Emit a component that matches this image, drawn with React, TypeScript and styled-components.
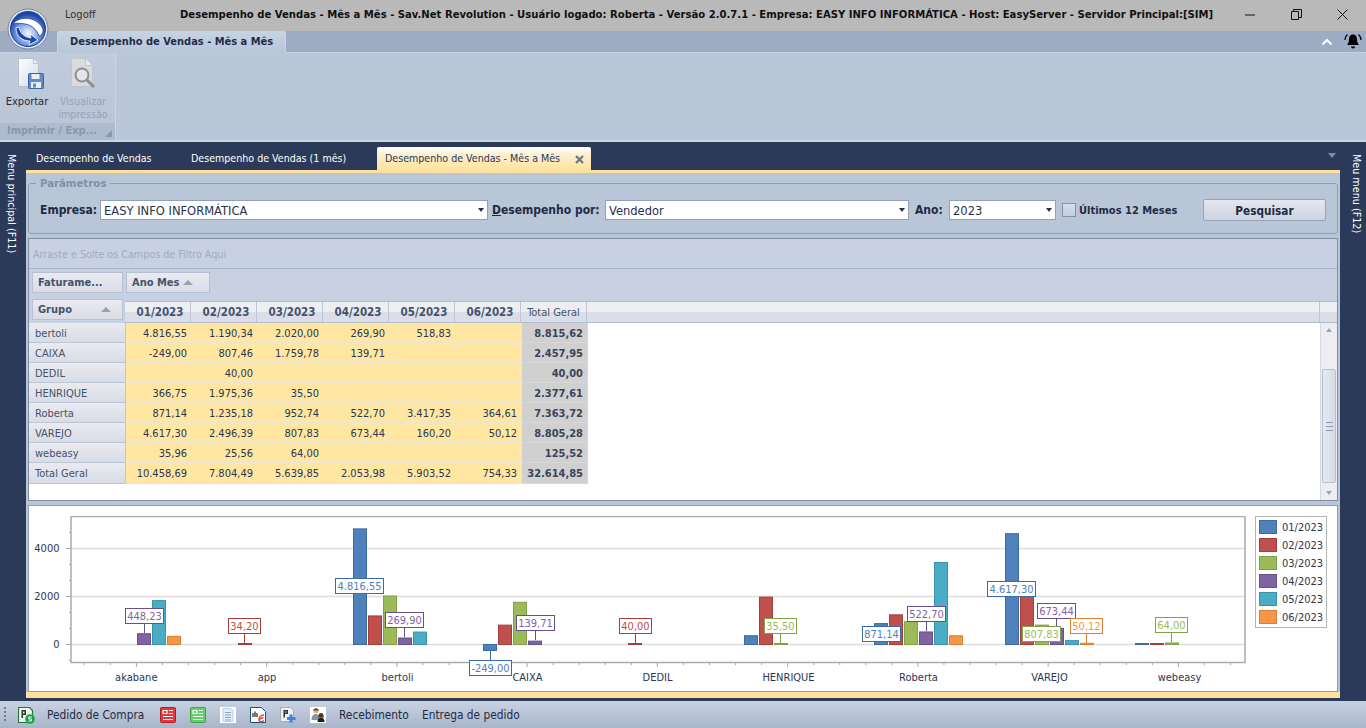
import React from 'react';
import styled, {createGlobalStyle} from 'styled-components';

const FONT = '"DejaVu Sans Condensed", "DejaVu Sans", sans-serif';
const NAVY = '#2b3a58';

const GlobalStyle = createGlobalStyle`
  html, body { margin: 0; padding: 0; }
  body { width: 1366px; height: 728px; overflow: hidden; font-family: ${FONT}; font-size: 11px; color: #1f2b45; }
  * { box-sizing: border-box; }
`;

const PERIODS = ['01/2023', '02/2023', '03/2023', '04/2023', '05/2023', '06/2023'];

const ROWS = [
  {name: 'bertoli', cells: ['4.816,55', '1.190,34', '2.020,00', '269,90', '518,83', ''], total: '8.815,62'},
  {name: 'CAIXA', cells: ['-249,00', '807,46', '1.759,78', '139,71', '', ''], total: '2.457,95'},
  {name: 'DEDIL', cells: ['', '40,00', '', '', '', ''], total: '40,00'},
  {name: 'HENRIQUE', cells: ['366,75', '1.975,36', '35,50', '', '', ''], total: '2.377,61'},
  {name: 'Roberta', cells: ['871,14', '1.235,18', '952,74', '522,70', '3.417,35', '364,61'], total: '7.363,72'},
  {name: 'VAREJO', cells: ['4.617,30', '2.496,39', '807,83', '673,44', '160,20', '50,12'], total: '8.805,28'},
  {name: 'webeasy', cells: ['35,96', '25,56', '64,00', '', '', ''], total: '125,52'},
  {name: 'Total Geral', cells: ['10.458,69', '7.804,49', '5.639,85', '2.053,98', '5.903,52', '754,33'], total: '32.614,85'},
];

const SERIES = [
  {fill: '#4f81bd', line: '#3d6a9f'},
  {fill: '#c0504d', line: '#a03f3d'},
  {fill: '#9bbb59', line: '#84a048'},
  {fill: '#8064a2', line: '#674f87'},
  {fill: '#4bacc6', line: '#3a93ab'},
  {fill: '#f79646', line: '#d98032'},
];

const GROUPS = [
  {name: 'akabane', x: 136.3, values: [0, 0, 0, 448.23, 1830, 340]},
  {name: 'app', x: 267, values: [0, 34.2, 0, 0, 0, 0]},
  {name: 'bertoli', x: 397.5, values: [4816.55, 1190.34, 2020, 269.9, 518.83, 0]},
  {name: 'CAIXA', x: 527.5, values: [-249, 807.46, 1759.78, 139.71, 0, 0]},
  {name: 'DEDIL', x: 657.5, values: [0, 40, 0, 0, 0, 0]},
  {name: 'HENRIQUE', x: 788.5, values: [366.75, 1975.36, 35.5, 0, 0, 0]},
  {name: 'Roberta', x: 918.5, values: [871.14, 1235.18, 952.74, 522.7, 3417.35, 364.61]},
  {name: 'VAREJO', x: 1049.5, values: [4617.3, 2496.39, 807.83, 673.44, 160.2, 50.12]},
  {name: 'webeasy', x: 1179.5, values: [35.96, 25.56, 64, 0, 0, 0]},
];

// label boxes in page coordinates, "to" is where the leader line ends
const LABELS = [
  {text: '448,23', s: 3, x: 125.5, y: 608.5, w: 38, to: 633},
  {text: '34,20', s: 1, x: 228.5, y: 618.5, w: 32, to: 643},
  {text: '4.816,55', s: 0, x: 335.5, y: 578.5, w: 48},
  {text: '269,90', s: 3, x: 385.5, y: 612.5, w: 38, to: 637},
  {text: '-249,00', s: 0, x: 469.5, y: 660.5, w: 42, from: 650},
  {text: '139,71', s: 3, x: 516.5, y: 615.5, w: 38, to: 640},
  {text: '40,00', s: 1, x: 619.5, y: 618.5, w: 32, to: 643},
  {text: '35,50', s: 2, x: 764.5, y: 618.5, w: 32, to: 643},
  {text: '871,14', s: 0, x: 862.5, y: 626.5, w: 38},
  {text: '522,70', s: 3, x: 907.5, y: 606.5, w: 38, to: 631},
  {text: '4.617,30', s: 0, x: 987.5, y: 581.5, w: 48},
  {text: '673,44', s: 3, x: 1037.5, y: 603.5, w: 38, to: 628},
  {text: '807,83', s: 2, x: 1022.5, y: 626.5, w: 38},
  {text: '50,12', s: 5, x: 1070.5, y: 618.5, w: 32, to: 643},
  {text: '64,00', s: 2, x: 1155.5, y: 617.5, w: 32, to: 642},
];

const Page = styled.div`
  width: 1366px;
  height: 728px;
  display: flex;
  flex-direction: column;
  position: relative;
  background: ${NAVY};
`;

const TitleBar = styled.div`
  height: 31px;
  background: #b9b9b9;
  display: flex;
  align-items: center;
  padding-left: 65px;
`;

const Logoff = styled.span`
  width: 115px;
  padding-bottom: 3px;
  color: #333;
`;

const AppTitle = styled.div`
  width: 1032px;
  font-size: 11.2px;
  font-weight: bold;
  color: #111;
  text-align: center;
  white-space: nowrap;
  padding-bottom: 2px;
`;

const WindowButtons = styled.div`
  margin-left: 33px;
  display: flex;
  gap: 35px;
  padding-bottom: 3px;
`;

const LogoWrap = styled.div`
  position: absolute;
  left: 7px;
  top: 8px;
  width: 42px;
  height: 42px;
`;

const RibbonTabs = styled.div`
  height: 22px;
  background: #9dabc3;
  border-bottom: 1px solid #c6d1e0;
  display: flex;
  align-items: flex-end;
  padding-left: 57px;
`;

const RibbonTab = styled.div`
  width: 229px;
  height: 22px;
  margin-bottom: -1px;
  padding: 3px 0 0 12px;
  background: linear-gradient(#c7d2e2, #b9c6d8);
  border: 1px solid #c9d4e3;
  border-bottom: none;
  border-radius: 2px 2px 0 0;
  font-weight: bold;
  color: #1f2d4c;
  white-space: nowrap;
`;

const RibbonRight = styled.div`
  margin-left: auto;
  align-self: center;
  display: flex;
  align-items: center;
  gap: 11px;
  padding-right: 4px;
`;

const RibbonBody = styled.div`
  height: 89px;
  background: #bac7d8;
  border-bottom: 2px solid #cdd7e4;
  display: flex;
`;

const RibbonGroup = styled.div`
  width: 116px;
  display: flex;
  flex-direction: column;
  background: linear-gradient(#c0cbdb, #b9c5d6);
  border-right: 1px solid #ccd6e3;
`;

const RibbonButtons = styled.div`
  flex: 1;
  display: flex;
`;

const RibbonButton = styled.div<{$off?: boolean}>`
  width: ${p => (p.$off ? '58px' : '54px')};
  padding-top: 5px;
  display: flex;
  flex-direction: column;
  align-items: center;
  text-align: center;
  line-height: 13px;
  font-size: ${p => (p.$off ? '10.6px' : '11px')};
  color: ${p => (p.$off ? '#94a2b8' : '#1f2b45')};
  svg { margin: 0 0 5px ${p => (p.$off ? '2px' : '6px')}; }
`;

const RibbonFooter = styled.div`
  height: 17px;
  padding: 1px 0 0 7px;
  display: flex;
  justify-content: space-between;
  background: #aebbcf;
  font-weight: bold;
  color: #8a97ae;
  svg { margin: 6px 3px 0 0; }
`;

const Workspace = styled.div`
  flex: 1;
  display: flex;
  min-height: 0;
`;

const SideStrip = styled.div<{$right: number}>`
  width: 26px;
  padding: 12px ${p => p.$right}px 0 0;
  writing-mode: vertical-rl;
  font-size: 10.7px;
  color: #fff;
  white-space: nowrap;
`;

const Center = styled.div`
  flex: 1;
  display: flex;
  flex-direction: column;
  min-width: 0;
`;

const DocTabs = styled.div`
  height: 28px;
  display: flex;
  align-items: flex-end;
  padding-left: 2px;
  font-size: 10.6px;
  color: #fff;
  position: relative;
`;

const DocTab = styled.div<{$active?: boolean; $w: number}>`
  width: ${p => p.$w}px;
  height: 23px;
  padding: 5px 0 0 8px;
  white-space: nowrap;
  display: flex;
  justify-content: space-between;
  ${p =>
    p.$active &&
    `background: linear-gradient(#fdfdfb, #fbeecb 40%, #ffe39d);
     color: #2b3a58;
     border-radius: 2px 2px 0 0;
     svg { margin: 3px 7px 0 0; }`}
`;

const TabMenu = styled.div`
  position: absolute;
  right: 4px;
  top: 11px;
  width: 0;
  height: 0;
  border: 4px solid transparent;
  border-top: 5px solid #7f8ca6;
`;

const MainPanel = styled.div`
  flex: 1;
  min-height: 0;
  background: #b9c6d8;
  border-top: 3px solid #ffe09c;
  border-bottom: 6px solid #ffe09c;
  padding: 4px 2px 0 2px;
  display: flex;
  flex-direction: column;
  margin-bottom: 3px;
`;

const ParamGroup = styled.fieldset`
  margin: 0;
  height: 57px;
  flex: none;
  padding: 9px 0 0 11px;
  border: 1px solid #8f9db4;
  border-radius: 3px;
`;

const ParamLegend = styled.legend`
  margin-left: -4px;
  padding: 0 4px;
  font-size: 11.3px;
  font-weight: bold;
  color: #8290a8;
`;

const ParamRow = styled.div`
  display: flex;
  align-items: center;
  height: 22px;
`;

const FieldLabel = styled.label<{$w: number; $left?: number}>`
  width: ${p => p.$w}px;
  padding-left: ${p => p.$left ?? 0}px;
  font-size: 12px;
  font-weight: bold;
  color: #1f2b45;
  white-space: nowrap;
  u { text-decoration: underline; }
`;

const Combo = styled.div<{$w: number}>`
  width: ${p => p.$w}px;
  height: 20px;
  background: #fff;
  border: 1px solid #929fb6;
  padding: 0 0 0 3px;
  display: flex;
  align-items: center;
  justify-content: space-between;
  font-size: 12.8px;
  color: #26324d;
  &::after {
    content: '';
    margin-right: 3px;
    border: 3.5px solid transparent;
    border-top: 4px solid #26324d;
    border-bottom: none;
  }
`;

const CheckBox = styled.div`
  width: 14px;
  height: 14px;
  margin: 0 3px 0 6px;
  border: 1px solid #8493ab;
  background: linear-gradient(#d6dde9, #c4cedd);
`;

const CheckLabel = styled.span`
  width: 124px;
  font-weight: bold;
  color: #1f2b45;
  white-space: nowrap;
`;

const SearchButton = styled.div`
  width: 123px;
  height: 22px;
  padding-top: 1px;
  border: 1px solid #97a5bb;
  border-radius: 2px;
  background: linear-gradient(#e4e7ee, #cdd4e1);
  font-size: 11.7px;
  font-weight: bold;
  color: #1f2b45;
  display: flex;
  align-items: center;
  justify-content: center;
`;

const PivotPanel = styled.div`
  margin-top: 4px;
  height: 263px;
  flex: none;
  border: 1px solid #7f8da5;
  background: #c8d1e2;
  display: flex;
  flex-direction: column;
`;

const FilterStrip = styled.div`
  height: 30px;
  flex: none;
  padding: 9px 0 0 4px;
  border-bottom: 1px solid #aab6ca;
  font-size: 10.7px;
  color: #9fabc0;
`;

const FieldRow = styled.div`
  height: 30px;
  flex: none;
  padding: 3px 0 0 3px;
  display: flex;
  gap: 3px;
`;

const FieldChip = styled.div<{$w: number}>`
  width: ${p => p.$w}px;
  height: 21px;
  padding-left: 5px;
  display: flex;
  align-items: center;
  gap: 4px;
  border: 1px solid #b7c1d3;
  background: linear-gradient(#e9ebf0, #d9dde6);
  font-weight: bold;
  color: #46526c;
  white-space: nowrap;
`;

const SortArrow = styled.span<{$ml?: number}>`
  margin-left: ${p => p.$ml ?? 0}px;
  border: 5px solid transparent;
  border-bottom: 5px solid #97a1b4;
  border-top: none;
`;

const HeaderRow = styled.div`
  height: 24px;
  flex: none;
  padding-left: 3px;
  display: flex;
`;

const ColumnBand = styled.div`
  flex: 1;
  margin: 2px 0 0 2px;
  display: flex;
  background: linear-gradient(#eceef2 50%, #dadee7 50%);
  border-top: 1px solid #b2bccf;
  border-bottom: 1px solid #b2bccf;
`;

const ColHead = styled.div<{$plain?: boolean}>`
  width: 66px;
  padding-left: ${p => (p.$plain ? '0' : '5px')};
  display: flex;
  align-items: center;
  justify-content: center;
  border-right: 1px solid #bcc6d7;
  font-size: ${p => (p.$plain ? '11px' : '11.5px')};
  font-weight: ${p => (p.$plain ? 'normal' : 'bold')};
  color: #46526c;
  white-space: nowrap;
`;

const ColFill = styled.div`
  flex: 1;
  border-right: 1px solid #bcc6d7;
`;

const ColEnd = styled.div`
  width: 17px;
`;

const PivotBody = styled.div`
  flex: 1;
  min-height: 0;
  display: flex;
  background: #fff;
`;

const PivotGrid = styled.div`
  flex: 1;
  display: grid;
  grid-template-columns: 97px repeat(7, 66px);
  grid-template-rows: repeat(7, 20px) 21px;
`;

const RowHead = styled.div`
  padding: 1px 0 0 6px;
  display: flex;
  align-items: center;
  background: linear-gradient(#e9ebf0, #d8dce5);
  border-bottom: 1px solid #bcc6d7;
  border-right: 1px solid #bcc6d7;
  color: #46526c;
`;

const Cell = styled.div`
  padding: 1px 4px 0 0;
  display: flex;
  align-items: center;
  justify-content: flex-end;
  background: #ffe6a2;
  border-bottom: 1px solid #e8e6d6;
  border-right: 1px solid #e8e6d6;
  color: #2b3650;
`;

const TotalCell = styled(Cell)`
  background: #d0d0d0;
  border-color: #d8d8d8;
  font-weight: bold;
  color: #3a4458;
`;

const ScrollBar = styled.div`
  width: 17px;
  background: #eceef3;
  border-left: 1px solid #d4d9e3;
  display: flex;
  flex-direction: column;
  align-items: center;
  justify-content: space-between;
  padding: 5px 0;
  position: relative;
`;

const ScrollThumb = styled.div`
  position: absolute;
  left: 1px;
  right: 1px;
  top: 46px;
  height: 114px;
  background: linear-gradient(90deg, #e6e9ef, #d6dbe5);
  border: 1px solid #b6c0d1;
  border-radius: 2px;
  display: flex;
  align-items: center;
  justify-content: center;
  &::after {
    content: '';
    width: 7px;
    height: 7px;
    border-top: 1px solid #8e9ab0;
    border-bottom: 1px solid #8e9ab0;
    background: linear-gradient(#8e9ab0, #8e9ab0) center / 100% 1px no-repeat;
  }
`;

const ScrollArrow = styled.span<{$down?: boolean}>`
  border: 3.5px solid transparent;
  ${p => (p.$down ? 'border-top: 4px solid #9aa5b8; border-bottom: none;' : 'border-bottom: 4px solid #9aa5b8; border-top: none;')}
`;

const ChartPanel = styled.div`
  margin-top: 4px;
  flex: 1;
  min-height: 0;
  background: #fff;
  border: 1px solid #8f9db4;
  display: flex;
  padding: 10px 0 0 0;
`;

const Legend = styled.div`
  width: 72px;
  height: 112px;
  padding: 3px 0 0 3px;
  border: 1px solid #b5b5b5;
  display: flex;
  flex-direction: column;
  gap: 4px;
`;

const LegendItem = styled.div`
  height: 14px;
  display: flex;
  align-items: center;
  gap: 5px;
  color: #2b3650;
`;

const Swatch = styled.span<{$fill: string; $line: string}>`
  width: 18px;
  height: 14px;
  background: ${p => p.$fill};
  border: 1px solid ${p => p.$line};
`;

const StatusBar = styled.div`
  height: 27px;
  flex: none;
  padding-left: 4px;
  background: linear-gradient(#c8d2e3, #a9b5ca);
  display: flex;
  align-items: center;
  font-size: 11.8px;
  color: #1f2b45;
  white-space: nowrap;
`;

const Grip = styled.span`
  width: 2px;
  height: 15px;
  margin-right: 12px;
  background: repeating-linear-gradient(#6f7d97 0 2px, transparent 2px 4px);
`;

const StatusIcon = styled.span<{$gap?: number}>`
  width: 16px;
  height: 16px;
  margin-right: ${p => p.$gap ?? 14}px;
  display: block;
  svg { display: block; }
`;

const StatusText = styled.span<{$w: number}>`
  width: ${p => p.$w}px;
  flex: none;
`;

const Logo = () => (
  <svg width="42" height="42" viewBox="0 0 42 42">
    <defs>
      <radialGradient id="lg" cx="50%" cy="62%" r="55%">
        <stop offset="0" stopColor="#f2f7ff" />
        <stop offset="0.55" stopColor="#7ea3ea" />
        <stop offset="1" stopColor="#1c43a6" />
      </radialGradient>
    </defs>
    <circle cx="21" cy="21" r="20" fill="#dfe7f3" stroke="#7486a6" />
    <circle cx="21" cy="21" r="17.5" fill="url(#lg)" stroke="#1d3f93" />
    <path d="M6 16c6-8 22-8 29 3 2 3 1 8-3 9-2-6-7-11-14-12-5-1-9-1-12 0z" fill="#fff" stroke="#1b3f8f" strokeWidth="0.8" />
    <path d="M12 19c1 6 5 10 12 11l-1-4 8 6-9 5 1-4c-8 0-14-5-14-13z" fill="#1d46a8" stroke="#fff" strokeWidth="0.8" />
  </svg>
);

const MinIcon = () => (
  <svg width="11" height="11" viewBox="0 0 11 11"><path d="M0 6h10" stroke="#111" fill="none" /></svg>
);

const RestoreIcon = () => (
  <svg width="11" height="11" viewBox="0 0 11 11">
    <path d="M.5 2.500h7v8h-7zM2.500 2.500v-2h8v8h-3" stroke="#111" fill="none" />
  </svg>
);

const CloseIcon = () => (
  <svg width="11" height="11" viewBox="0 0 11 11"><path d="M.5.5l10 10M10.500.5l-10 10" stroke="#111" fill="none" /></svg>
);

const ChevronUp = () => (
  <svg width="12" height="8" viewBox="0 0 12 8">
    <path d="M1.500 6.500L6 2l4.500 4.500" stroke="#fff" strokeWidth="2.200" fill="none" />
  </svg>
);

const BellIcon = () => (
  <svg width="18" height="17" viewBox="0 0 18 17">
    <path d="M9 1.500c-3 0-4 2.500-4 5 0 3-1 4-2 5.500h12c-1-1.500-2-2.500-2-5.500 0-2.500-1-5-4-5zM7 13.500h4a2 2 0 0 1-4 0z" fill="#000" />
    <path d="M3.500 1.500C1.800 3 1 5 1 7M14.500 1.500C16.200 3 17 5 17 7" stroke="#000" fill="none" strokeWidth="1.200" />
  </svg>
);

const ExportIcon = () => (
  <svg width="27" height="32" viewBox="0 0 27 32">
    <defs>
      <linearGradient id="pg" x1="0" y1="0" x2="1" y2="1">
        <stop offset="0" stopColor="#fff" />
        <stop offset="1" stopColor="#cfdcef" />
      </linearGradient>
    </defs>
    <path d="M1.500 .5h15l5 5v23h-20z" fill="url(#pg)" stroke="#b7c0cf" />
    <path d="M16.500 .5v5h5" fill="#eef2f8" stroke="#b7c0cf" />
    <rect x="11.500" y="15.500" width="15" height="15" rx="1" fill="#5f8bc9" stroke="#3c659f" />
    <rect x="14.500" y="16" width="8" height="5" fill="#e9f0fa" />
    <rect x="14" y="24" width="10" height="6" fill="#e6edf7" />
    <rect x="16" y="25.500" width="3" height="4" fill="#5f8bc9" />
  </svg>
);

const PreviewIcon = () => (
  <svg width="26" height="32" viewBox="0 0 26 32">
    <path d="M.5 .5h14l7 7v21h-21z" fill="#d9dbdf" stroke="#c2c5ca" />
    <path d="M14.500 .5v7h7" fill="#e9eaed" stroke="#c2c5ca" />
    <circle cx="11" cy="17" r="6.500" fill="#e3e5e8" stroke="#8b8e92" strokeWidth="2" />
    <path d="M16 22l7 7" stroke="#8b8e92" strokeWidth="3" />
  </svg>
);

const TabClose = () => (
  <svg width="9" height="9" viewBox="0 0 9 9"><path d="M1 1l7 7M8 1L1 8" stroke="#6d7686" strokeWidth="2.200" /></svg>
);

const Launcher = () => (
  <svg width="7" height="7" viewBox="0 0 7 7"><path d="M7 0v7H0z" fill="#8b98ae" /></svg>
);

const IconPurchase = () => (
  <svg width="17" height="17" viewBox="0 0 17 17">
    <path d="M.5.5h11l3 3v12H.5z" fill="#eef6ee" stroke="#1f7a3a" strokeWidth="1.200" />
    <path d="M3.500 3h4.500v5H5v3H3.500zM5 4.500V6.500h1.500V4.500z" fill="#333" fillRule="evenodd" />
    <circle cx="12" cy="12" r="4.800" fill="#18a34a" />
    <path d="M13.800 10h-3v2h2.600v2h-3" stroke="#fff" fill="none" />
  </svg>
);

const IconSheet = ({fill, line}: {fill: string; line: string}) => (
  <svg width="16" height="16" viewBox="0 0 16 16">
    <rect x=".5" y=".5" width="15" height="15" rx="1" fill={fill} stroke={line} />
    <path d="M3 3.500h4v3H3zM9 3.500h4M9 6.500h4M3 9.500h10M3 12.500h10" stroke="#fff" fill="none" strokeWidth="1.200" />
  </svg>
);

const IconList = () => (
  <svg width="16" height="16" viewBox="0 0 16 16">
    <rect width="16" height="16" fill="#fff" />
    <path d="M3 1.500h8l2 2v11H3z" fill="#e3eef8" stroke="#b8cfe4" />
    <path d="M5 5.500h6M5 8h6M5 10.500h6M5 13h6" stroke="#7fa6c9" />
  </svg>
);

const IconNfe = () => (
  <svg width="16" height="16" viewBox="0 0 16 16">
    <path d="M.5.5h11l4 4v11H.5z" fill="#fff" stroke="#17527f" />
    <path d="M3 10V6M5 10V4.500M7 10V6" stroke="#222" strokeWidth="1.200" />
    <path d="M14 8c-3 0-5 2-5 4.500 0 2.500 3 3 5 1M9.500 12l4-1.500" stroke="#e0452a" fill="none" strokeWidth="1.500" />
  </svg>
);

const IconAdd = () => (
  <svg width="16" height="16" viewBox="0 0 16 16">
    <path d="M.5.5h10l3 3v11H.5z" fill="#eceef1" stroke="#a8adb5" />
    <path d="M3.500 3h4.500v4H5v3.500H3.500zM5 4.500V5.500h1.500V4.500z" fill="#333" fillRule="evenodd" />
    <path d="M11 7.500v8M7 11.500h8.500" stroke="#3c82e0" strokeWidth="3" />
  </svg>
);

const IconPeople = () => (
  <svg width="16" height="16" viewBox="0 0 16 16">
    <rect width="16" height="16" fill="#fff" />
    <circle cx="6" cy="4" r="2.500" fill="#e0b080" />
    <path d="M3 3.500c1-3 5-3 6 0z" fill="#6a4a2a" />
    <path d="M1.500 13c0-4 2-6 4.500-6 1.500 0 2.500 1 3 2v4z" fill="#8a94a4" />
    <circle cx="11" cy="8" r="2.300" fill="#eabb8c" />
    <path d="M8.500 8.500c0-3.500 5-3.500 5 0l.5 2h-6z" fill="#5a3418" />
    <path d="M7.500 15c0-3 1.500-4.500 3.500-4.500s3.500 1.500 3.500 4.500z" fill="#1e1e1e" />
  </svg>
);

// page coordinates are kept in the viewBox so the numbers read like the picture
const Chart = () => {
  const zero = 644.5;
  const scale = 48 / 2000;
  const ticksY = [532.5, 548.5, 564.5, 580.5, 596.5, 612.5, 628.5, 644.5, 660.5];
  const ticksX = Array.from({length: 45}, (_, i) => 84.3 + i * 26.05).filter(x => x < 1242);
  return (
    <svg width="1226" height="175" viewBox="29 516 1226 175" style={{flex: 'none'}}>
      {[548.5, 596.5, 644.5].map(y => (
        <line key={y} x1="71" x2="1245" y1={y} y2={y} stroke="#dedede" strokeWidth="1.500" />
      ))}
      {ticksY.map((y, i) => (
        <line key={y} x1={i % 3 === 1 ? 66 : 69} x2="71" y1={y} y2={y} stroke="#a8a8a8" />
      ))}
      {ticksX.map((x, i) => (
        <line key={x} x1={x} x2={x} y1="662" y2={i % 5 === 2 ? 667 : 665} stroke="#a8a8a8" />
      ))}
      <path d="M71 516.500H1245V662.500H71z" fill="none" stroke="#ababab" strokeWidth="1.500" />
      {[['4000', 552], ['2000', 600], ['0', 648]].map(([t, y]) => (
        <text key={t} x="59.500" y={y} textAnchor="end" fontSize="11" fontFamily={FONT} fill="#2b3650">{t}</text>
      ))}
      {GROUPS.map(g => (
        <g key={g.name}>
          {g.values.map((v, i) => {
            if (!v) return null;
            const h = Math.max(Math.abs(v) * scale, 1);
            const y = v > 0 ? zero - h : zero;
            return (
              <rect
                key={i}
                x={Math.round(g.x - 44.5 + i * 15) + 0.5}
                y={y}
                width="13"
                height={h}
                fill={SERIES[i].fill}
                stroke={SERIES[i].line}
              />
            );
          })}
          <text x={g.x} y="681" textAnchor="middle" fontSize="11" fontFamily={FONT} fill="#2b3650">{g.name}</text>
        </g>
      ))}
      {LABELS.map(l => {
        const cx = l.x + l.w / 2;
        const c = SERIES[l.s].line;
        return (
          <g key={l.text}>
            {l.to && <line x1={cx} x2={cx} y1={l.y + 15} y2={l.to} stroke={c} />}
            {l.from && <line x1={cx} x2={cx} y1={l.from} y2={l.y} stroke={c} />}
            <rect x={l.x} y={l.y} width={l.w} height="15" fill="#fff" stroke={c} />
            <text x={cx} y={l.y + 11.5} textAnchor="middle" fontSize="11" fontFamily={FONT} fill={SERIES[l.s].fill}>{l.text}</text>
          </g>
        );
      })}
    </svg>
  );
};

const App: React.FC = () => {
  return (
    <Page>
      <GlobalStyle />
      <TitleBar>
        <Logoff>Logoff</Logoff>
        <AppTitle>
          Desempenho de Vendas - Mês a Mês - Sav.Net Revolution - Usuário logado: Roberta - Versão 2.0.7.1 - Empresa: EASY INFO INFORMÁTICA - Host: EasyServer - Servidor Principal:[SIM]
        </AppTitle>
        <WindowButtons>
          <MinIcon />
          <RestoreIcon />
          <CloseIcon />
        </WindowButtons>
      </TitleBar>
      <LogoWrap>
        <Logo />
      </LogoWrap>
      <RibbonTabs>
        <RibbonTab>Desempenho de Vendas - Mês a Mês</RibbonTab>
        <RibbonRight>
          <ChevronUp />
          <BellIcon />
        </RibbonRight>
      </RibbonTabs>
      <RibbonBody>
        <RibbonGroup>
          <RibbonButtons>
            <RibbonButton>
              <ExportIcon />
              Exportar
            </RibbonButton>
            <RibbonButton $off>
              <PreviewIcon />
              Visualizar impressão
            </RibbonButton>
          </RibbonButtons>
          <RibbonFooter>
            Imprimir / Exp...
            <Launcher />
          </RibbonFooter>
        </RibbonGroup>
      </RibbonBody>
      <Workspace>
        <SideStrip $right={8}>Menu principal (F11)</SideStrip>
        <Center>
          <DocTabs>
            <DocTab $w={155}>Desempenho de Vendas</DocTab>
            <DocTab $w={194}>Desempenho de Vendas (1 mês)</DocTab>
            <DocTab $w={214} $active>
              Desempenho de Vendas - Mês a Mês
              <TabClose />
            </DocTab>
            <TabMenu />
          </DocTabs>
          <MainPanel>
            <ParamGroup>
              <ParamLegend>Parâmetros</ParamLegend>
              <ParamRow>
                <FieldLabel $w={60}>Empresa:</FieldLabel>
                <Combo $w={388}>EASY INFO INFORMÁTICA</Combo>
                <FieldLabel $w={117} $left={4}><u>D</u>esempenho por:</FieldLabel>
                <Combo $w={304}>Vendedor</Combo>
                <FieldLabel $w={40} $left={6}>Ano:</FieldLabel>
                <Combo $w={107}>2023</Combo>
                <CheckBox />
                <CheckLabel>Últimos 12 Meses</CheckLabel>
                <SearchButton>Pesquisar</SearchButton>
              </ParamRow>
            </ParamGroup>
            <PivotPanel>
              <FilterStrip>Arraste e Solte os Campos de Filtro Aqui</FilterStrip>
              <FieldRow>
                <FieldChip $w={91}>Faturame...</FieldChip>
                <FieldChip $w={84}>Ano Mes<SortArrow /></FieldChip>
              </FieldRow>
              <HeaderRow>
                <FieldChip $w={91}>Grupo<SortArrow $ml={25} /></FieldChip>
                <ColumnBand>
                  {PERIODS.map(p => (
                    <ColHead key={p}>{p}</ColHead>
                  ))}
                  <ColHead $plain>Total Geral</ColHead>
                  <ColFill />
                  <ColEnd />
                </ColumnBand>
              </HeaderRow>
              <PivotBody>
                <PivotGrid>
                  {ROWS.map(r => (
                    <React.Fragment key={r.name}>
                      <RowHead>{r.name}</RowHead>
                      {r.cells.map((c, i) => (
                        <Cell key={i}>{c}</Cell>
                      ))}
                      <TotalCell>{r.total}</TotalCell>
                    </React.Fragment>
                  ))}
                </PivotGrid>
                <ScrollBar>
                  <ScrollArrow />
                  <ScrollThumb />
                  <ScrollArrow $down />
                </ScrollBar>
              </PivotBody>
            </PivotPanel>
            <ChartPanel>
              <Chart />
              <Legend>
                {PERIODS.map((p, i) => (
                  <LegendItem key={p}>
                    <Swatch $fill={SERIES[i].fill} $line={SERIES[i].line} />
                    {p}
                  </LegendItem>
                ))}
              </Legend>
            </ChartPanel>
          </MainPanel>
        </Center>
        <SideStrip $right={3}>Meu menu (F12)</SideStrip>
      </Workspace>
      <StatusBar>
        <Grip />
        <StatusIcon $gap={13}><IconPurchase /></StatusIcon>
        <StatusText $w={113}>Pedido de Compra</StatusText>
        <StatusIcon><IconSheet fill="#e0383c" line="#a82326" /></StatusIcon>
        <StatusIcon><IconSheet fill="#66cf6d" line="#46a04c" /></StatusIcon>
        <StatusIcon><IconList /></StatusIcon>
        <StatusIcon><IconNfe /></StatusIcon>
        <StatusIcon><IconAdd /></StatusIcon>
        <StatusIcon $gap={13}><IconPeople /></StatusIcon>
        <StatusText $w={83}>Recebimento</StatusText>
        <StatusText $w={100}>Entrega de pedido</StatusText>
      </StatusBar>
    </Page>
  );
};

export default App;
